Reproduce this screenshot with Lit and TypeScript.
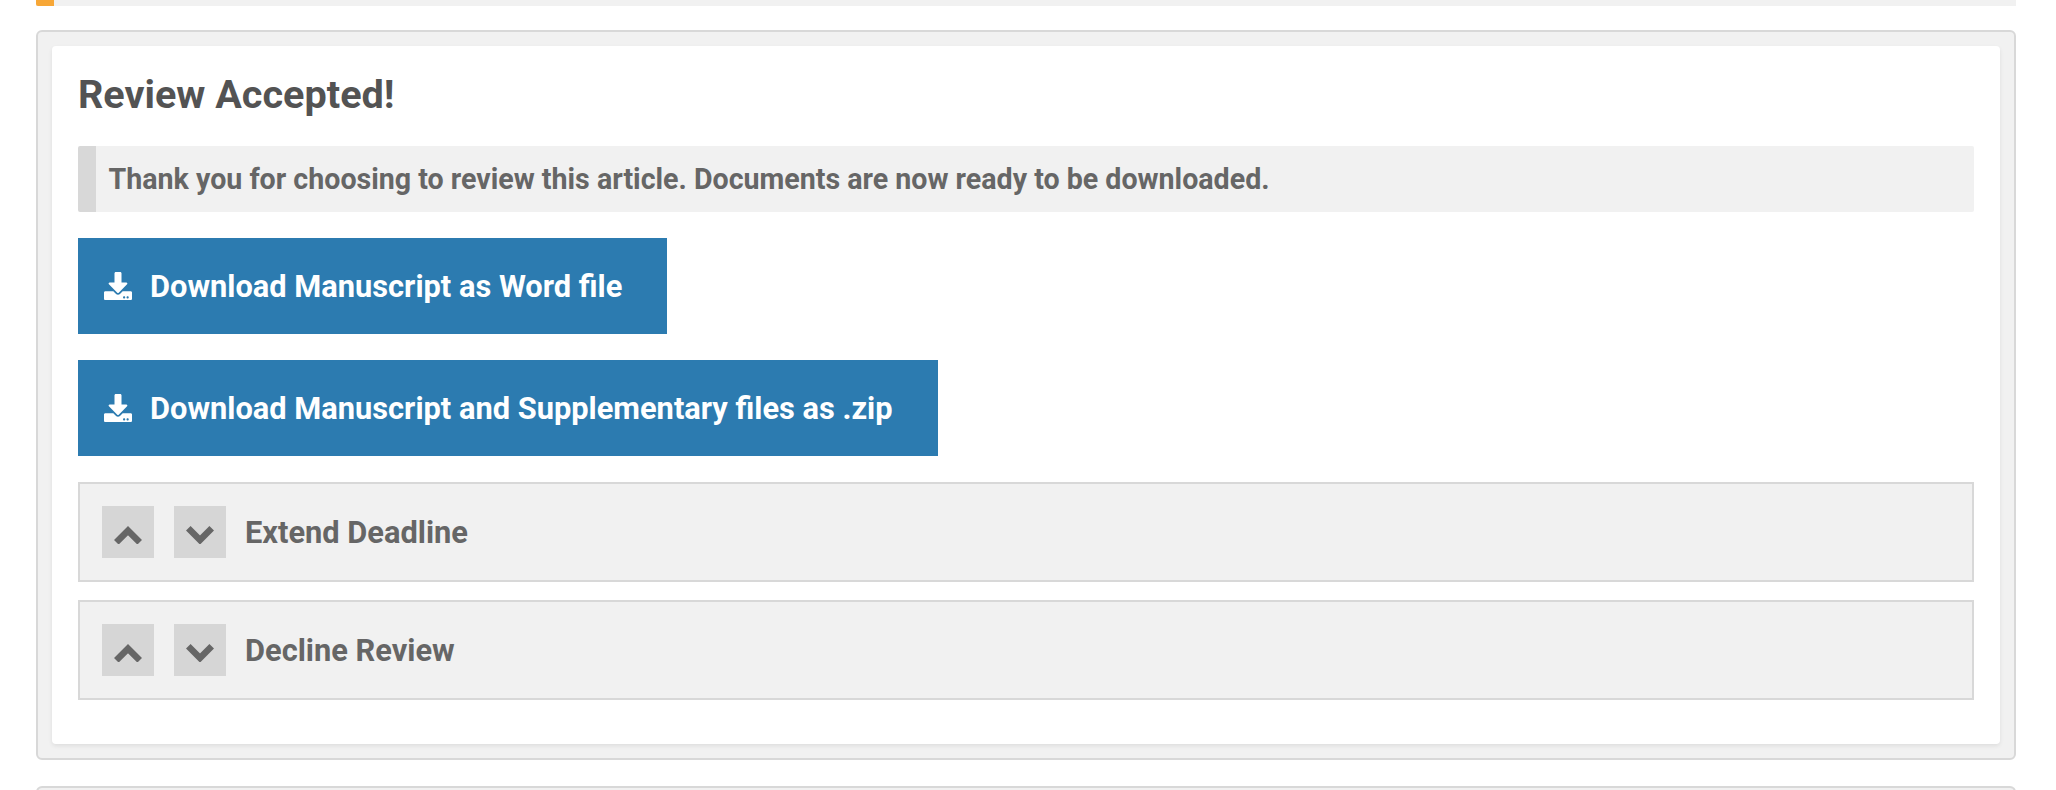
import { LitElement, html, css, svg } from "lit";
import { customElement } from "lit/decorators.js";

const download = svg`<path d="M216 0h80c13.3 0 24 10.7 24 24v168h87.7c17.8 0 26.7 21.5 14.1 34.1L269.7 378.3c-7.5 7.5-19.8 7.5-27.3 0L90.1 226.1c-12.6-12.6-3.7-34.1 14.1-34.1H192V24c0-13.3 10.7-24 24-24zm296 376v112c0 13.3-10.7 24-24 24H24c-13.3 0-24-10.7-24-24V376c0-13.3 10.7-24 24-24h146.7l49 49c20.1 20.1 52.5 20.1 72.6 0l49-49H488c13.3 0 24 10.7 24 24zm-124 88c0-11-9-20-20-20s-20 9-20 20 9 20 20 20 20-9 20-20zm64 0c0-11-9-20-20-20s-20 9-20 20 9 20 20 20 20-9 20-20z"/>`;
const up = svg`<polyline points="2.3,16.3 14,4.6 25.7,16.3"/>`;
const down = svg`<polyline points="2.3,2.3 14,14 25.7,2.3"/>`;

@customElement("app-root")
export class AppRoot extends LitElement {
  static styles = css`
    :host {
      display: block;
      height: 790px;
      overflow: hidden;
      box-sizing: border-box;
      padding: 0 40px 0 36px;
      background: #fff;
      font-family: Roboto, "Liberation Sans", sans-serif;
      font-weight: 700;
    }
    .topbar {
      height: 6px;
      background: #f1f1f1;
      margin-bottom: 24px;
    }
    .topbar-mark {
      display: block;
      width: 18px;
      height: 6px;
      background: #f7a737;
      border-radius: 0 0 0 2px;
    }
    .card {
      box-sizing: border-box;
      background: #f1f1f1;
      border: 2px solid #d8d8d8;
      border-radius: 6px;
      padding: 14px;
      margin-bottom: 26px;
    }
    .inner {
      box-sizing: border-box;
      height: 698px;
      background: #fff;
      border-radius: 4px;
      padding: 26px;
      box-shadow: 0 2px 4px rgba(0, 0, 0, 0.08);
      display: flex;
      flex-direction: column;
    }
    .next {
      height: 100px;
      margin: 0;
    }
    h1 {
      margin: 0 0 26px;
      font-size: 39.6px;
      line-height: 46px;
      padding-bottom: 2px;
      font-weight: 700;
      color: #535353;
    }
    .alert {
      box-sizing: border-box;
      height: 66px;
      display: flex;
      align-items: center;
      background: #f1f1f1;
      border-left: 18px solid #d8d8d8;
      border-radius: 2px;
      padding-left: 12.5px;
      padding-bottom: 1px;
      font-size: 28.6px;
      color: #666;
      margin-bottom: 26px;
    }
    .btn {
      box-sizing: border-box;
      align-self: flex-start;
      height: 96px;
      display: flex;
      align-items: center;
      gap: 18px;
      padding: 0 45px 0 26px;
      background: #2c7bb0;
      color: #fff;
      font-size: 30.8px;
      margin-bottom: 26px;
    }
    .btn svg {
      width: 28px;
      height: 28px;
      fill: #fff;
      flex: none;
    }
    .panel {
      box-sizing: border-box;
      height: 100px;
      display: flex;
      align-items: center;
      gap: 19px;
      padding: 0 22px;
      background: #f1f1f1;
      border: 2px solid #d8d8d8;
      color: #666;
      font-size: 30.8px;
      margin-bottom: 18px;
    }
    .tog {
      box-sizing: border-box;
      width: 52px;
      height: 52px;
      padding-top: 6px;
      background: #d6d6d6;
      display: flex;
      align-items: center;
      justify-content: center;
      flex: none;
    }
    .tog + .tog {
      margin-left: 1px;
    }
    .tog svg {
      width: 28px;
      height: 18.6px;
      fill: none;
      stroke: #666;
      stroke-width: 6.5;
    }
  `;

  private panel(label: string) {
    return html`<div class="panel">
      <span class="tog"><svg viewBox="0 0 28 18.6">${up}</svg></span>
      <span class="tog"><svg viewBox="0 0 28 18.6">${down}</svg></span>
      <span>${label}</span>
    </div>`;
  }

  private button(label: string) {
    return html`<div class="btn">
      <svg viewBox="0 0 512 512">${download}</svg><span>${label}</span>
    </div>`;
  }

  render() {
    return html`
      <div class="topbar"><span class="topbar-mark"></span></div>
      <div class="card">
        <div class="inner">
          <h1>Review Accepted!</h1>
          <div class="alert">Thank you for choosing to review this article. Documents are now ready to be downloaded.</div>
          ${this.button("Download Manuscript as Word file")}
          ${this.button("Download Manuscript and Supplementary files as .zip")}
          ${this.panel("Extend Deadline")}
          ${this.panel("Decline Review")}
        </div>
      </div>
      <div class="card next"></div>
    `;
  }
}
